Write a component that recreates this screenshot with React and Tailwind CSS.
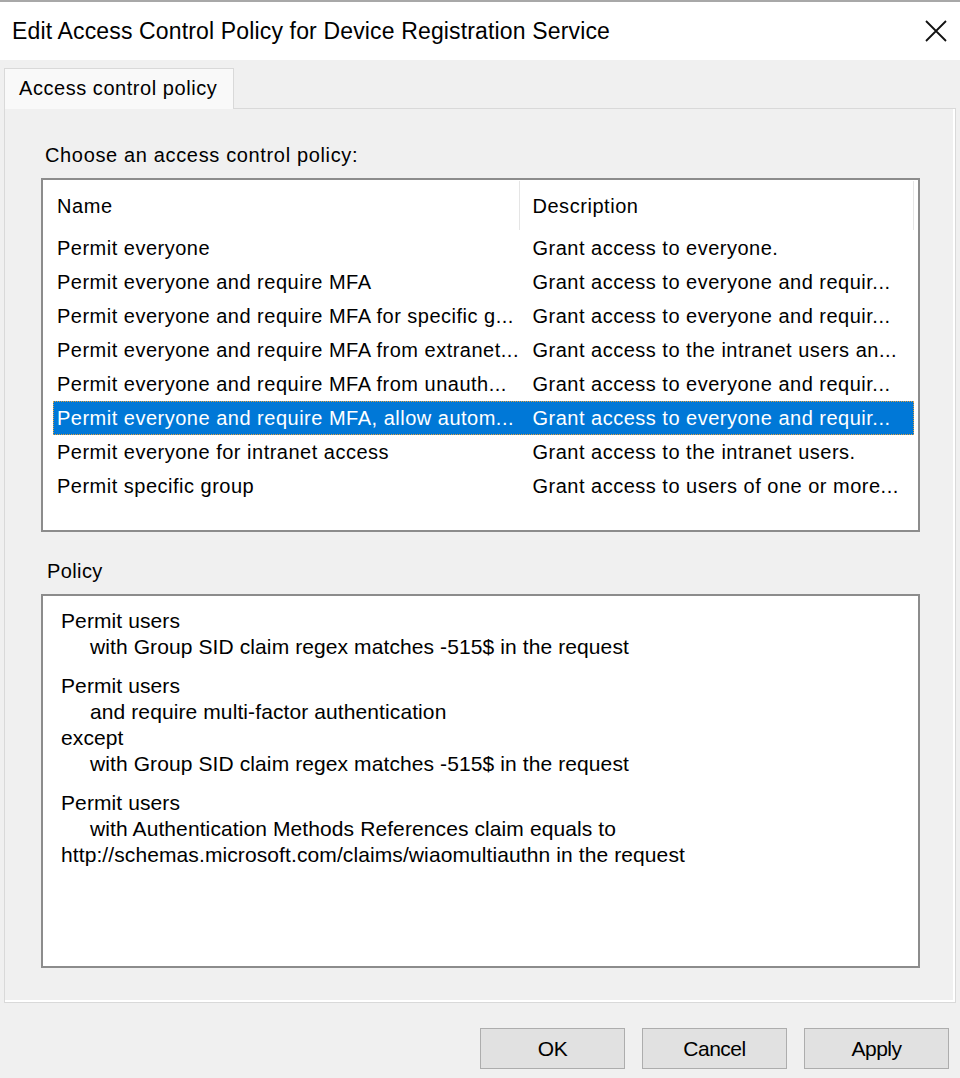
import React from "react";

const policies = [
  { name: "Permit everyone", desc: "Grant access to everyone." },
  { name: "Permit everyone and require MFA", desc: "Grant access to everyone and requir..." },
  { name: "Permit everyone and require MFA for specific g...", desc: "Grant access to everyone and requir..." },
  { name: "Permit everyone and require MFA from extranet...", desc: "Grant access to the intranet users an..." },
  { name: "Permit everyone and require MFA from unauth...", desc: "Grant access to everyone and requir..." },
  { name: "Permit everyone and require MFA, allow autom...", desc: "Grant access to everyone and requir...", selected: true },
  { name: "Permit everyone for intranet access", desc: "Grant access to the intranet users." },
  { name: "Permit specific group", desc: "Grant access to users of one or more..." },
];

// blocos do texto da política: [recuo, texto]
const rules = [
  [
    [0, "Permit users"],
    [1, "with Group SID claim regex matches -515$ in the request"],
  ],
  [
    [0, "Permit users"],
    [1, "and require multi-factor authentication"],
    [0, "except"],
    [1, "with Group SID claim regex matches -515$ in the request"],
  ],
  [
    [0, "Permit users"],
    [1, "with Authentication Methods References claim equals to"],
    [0, "http://schemas.microsoft.com/claims/wiaomultiauthn in the request"],
  ],
];

function Button({ children }) {
  return (
    <button className="w-[145px] h-[41px] bg-[#e1e1e1] border border-[#adadad] text-[21px] text-black tracking-[-0.5px] flex items-center justify-center">
      {children}
    </button>
  );
}

export default function App() {
  return (
    <div className="w-[960px] h-[1078px] bg-[#f0f0f0] font-['Liberation_Sans',Arial,sans-serif] text-black flex flex-col overflow-hidden">
      {/* barra de título */}
      <div className="h-[60px] shrink-0 bg-white border-t-2 border-[#a8a8a8] flex items-center justify-between pl-[12px] pr-[13px]">
        <span className="text-[23px] tracking-[0.15px] leading-none">
          Edit Access Control Policy for Device Registration Service
        </span>
        <svg width="22" height="22" viewBox="0 0 22 22">
          <path d="M1 1 L21 21 M21 1 L1 21" stroke="#111" strokeWidth="1.8" />
        </svg>
      </div>

      {/* aba */}
      <div className="pl-[4px] pt-[7px] flex">
        <div className="w-[230px] h-[41px] bg-[#f9f9f9] border border-b-0 border-[#d9d9d9] flex items-center pl-[14px] pb-[3px] text-[20px] tracking-[0.55px] relative top-[1px]">
          Access control policy
        </div>
      </div>

      {/* painel */}
      <div className="mx-[4px] h-[895px] border border-[#d9d9d9] bg-[#f0f0f0] shadow-[inset_-2px_-2px_0_#ffffff] pl-[36px] pr-[35px]">
        <div className="pt-[34px] pl-[4px] text-[20px] leading-[24px] tracking-[0.65px]">Choose an access control policy:</div>

        <div className="mt-[11px] h-[354px] bg-white border-2 border-[#8c8c8c] pt-[1px] pl-[10px] pr-[4px]">
          <div className="flex h-[49px] items-stretch text-[20px] tracking-[0.55px]">
            <div className="w-[468px] border-r border-[#e5e5e5] flex items-center pl-[4px] pt-[1px]">Name</div>
            <div className="w-[394px] border-r border-[#e5e5e5] flex items-center pl-[12px] pt-[1px]">Description</div>
          </div>
          <div className="flex flex-col pt-[1px]">
            {policies.map((p) => (
              <div
                key={p.name}
                className={`flex h-[34px] items-center text-[20px] tracking-[0.5px] whitespace-nowrap ${
                  p.selected ? "bg-[#0078d7] text-white outline-1 outline-dotted outline-[#e0a040] -outline-offset-1" : ""
                }`}
              >
                <div className="w-[468px] pl-[4px] overflow-hidden">{p.name}</div>
                <div className="w-[394px] pl-[12px] overflow-hidden">{p.desc}</div>
              </div>
            ))}
          </div>
        </div>

        <div className="mt-[27px] pl-[6px] text-[20px] leading-[24px] tracking-[0.4px]">Policy</div>

        <div className="mt-[11px] h-[374px] bg-white border-2 border-[#8c8c8c] pl-[18px] pt-[12px] text-[21px] tracking-[0.1px] leading-[26px] flex flex-col gap-[13px]">
          {rules.map((block, i) => (
            <div key={i} className="flex flex-col">
              {block.map(([indent, text], j) => (
                <div key={j} className={indent ? "pl-[29px]" : ""}>{text}</div>
              ))}
            </div>
          ))}
        </div>
      </div>

      {/* botões */}
      <div className="flex justify-end gap-[17px] pr-[11px] pt-[25px]">
        <Button>OK</Button>
        <Button>Cancel</Button>
        <Button>Apply</Button>
      </div>
    </div>
  );
}
